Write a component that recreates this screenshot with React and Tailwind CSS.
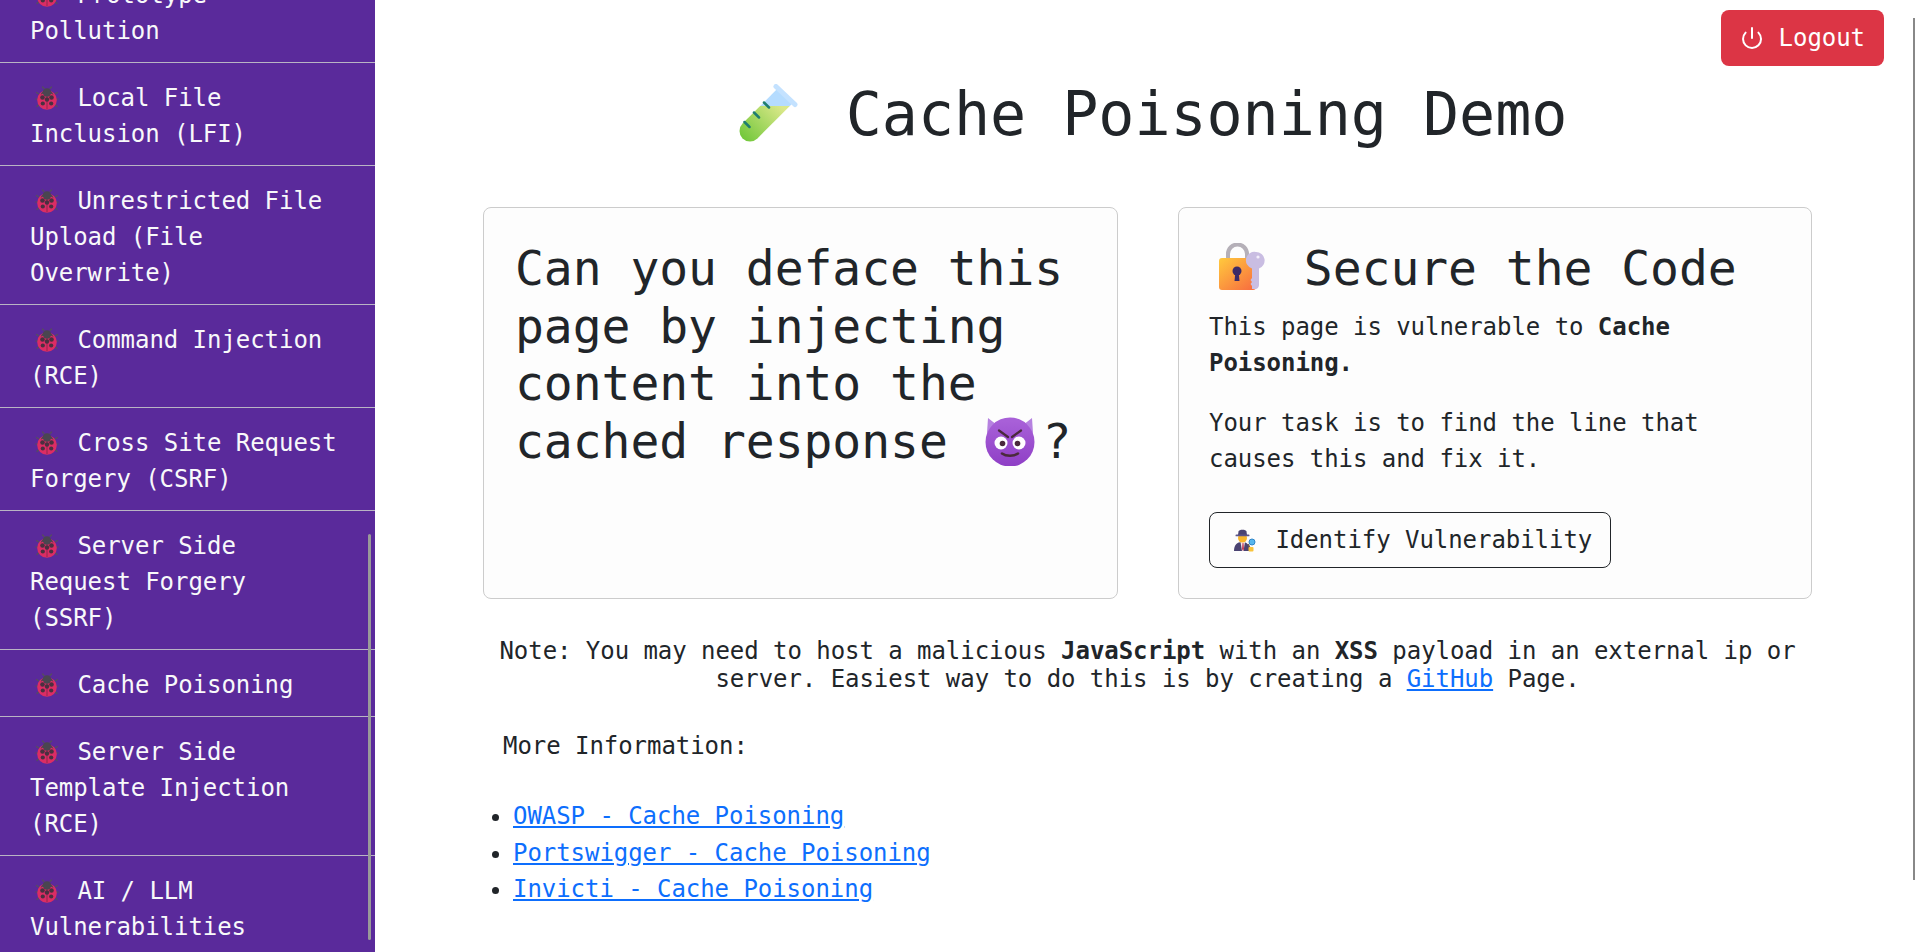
import React from 'react';
import { Power } from 'lucide-react';

const items = [
    { name: 'Prototype Pollution' },
    { name: 'Local File Inclusion (LFI)' },
    { name: 'Unrestricted File Upload (File Overwrite)' },
    { name: 'Command Injection (RCE)' },
    { name: 'Cross Site Request Forgery (CSRF)' },
    { name: 'Server Side Request Forgery (SSRF)' },
    { name: 'Cache Poisoning' },
    { name: 'Server Side Template Injection (RCE)' },
    { name: 'AI / LLM Vulnerabilities' },
];

const links = [
    'OWASP - Cache Poisoning',
    'Portswigger - Cache Poisoning',
    'Invicti - Cache Poisoning',
];

function Ladybug() {
    return (
        <span className="inline-flex w-[33px] justify-center align-[-4px]">
            <svg width="24" height="24" viewBox="0 0 24 24" fill="none">
                <g stroke="#55505c" strokeWidth="1.2" strokeLinecap="round">
                    <path d="M4 8 1.5 6.5M3 13H.7M4.5 18l-2.5 2.5M20 8l2.5-1.5M21 13h2.3M19.500 18l2.500 2.500" />
                    <path d="M9 2.500 7.500 1M15 2.500 16.500 1" />
                </g>
                <circle cx="12" cy="14" r="9.800" fill="#dc2d64" />
                <path d="M12 5v18" stroke="#7d2748" strokeWidth=".8" />
                <path d="M5.500 9a6.800 6.800 0 0 1 13 0c-2-1.500-4-2-6.500-2s-4.500.5-6.500 2z" fill="#4a4650" />
                <circle cx="12" cy="6.500" r="4.200" fill="#4a4650" />
                <circle cx="7.500" cy="11.500" r="2.300" fill="#4a3040" />
                <circle cx="16.500" cy="11.500" r="2.300" fill="#4a3040" />
                <circle cx="12" cy="13.500" r="2.200" fill="#4a3040" />
                <circle cx="7.800" cy="17.500" r="2.100" fill="#4a3040" />
                <circle cx="16.200" cy="17.500" r="2.100" fill="#4a3040" />
            </svg>
        </span>
    );
}

function TestTube() {
    return (
        <span className="inline-flex w-[82px] justify-center align-[-8px]">
            <svg width="59" height="59" viewBox="0 0 59 59" fill="none">
                <defs>
                    <clipPath id="tube-top"><rect x="0" y="0" width="59" height="22" /></clipPath>
                    <clipPath id="tube-liquid"><rect x="0" y="22" width="59" height="37" /></clipPath>
                    <linearGradient id="tube-green" x1="40" y1="20" x2="5" y2="55" gradientUnits="userSpaceOnUse">
                        <stop offset="0" stopColor="#dbe88a" />
                        <stop offset="1" stopColor="#74c83c" />
                    </linearGradient>
                </defs>
                <path d="M47 11 11 47" stroke="#b5dcff" strokeWidth="21" clipPath="url(#tube-top)" />
                <path d="M47 11 11 47" stroke="url(#tube-green)" strokeWidth="21" strokeLinecap="round" clipPath="url(#tube-liquid)" />
                <path d="M37 2.500 56 20.500" stroke="#c4e2ff" strokeWidth="5" strokeLinecap="round" />
                <path d="M25 18.500 30 23.500M15 28.500 20 33.500M5.500 38 10.500 43" stroke="#1f7d70" strokeWidth="2.500" strokeLinecap="round" />
            </svg>
        </span>
    );
}

function LockKey() {
    return (
        <span className="inline-flex w-[66px] justify-center align-[-6px]">
            <svg width="46" height="48" viewBox="0 0 46 48" fill="none">
                <defs>
                    <linearGradient id="lock-body" x1="4" y1="15" x2="30" y2="48" gradientUnits="userSpaceOnUse">
                        <stop offset="0" stopColor="#ffc53d" />
                        <stop offset="1" stopColor="#f8703f" />
                    </linearGradient>
                </defs>
                <path d="M9 17V11a9.500 9.500 0 0 1 19 0v6" stroke="#b5b0b8" strokeWidth="4" />
                <rect x="0" y="15" width="37" height="32" rx="3" fill="url(#lock-body)" />
                <circle cx="18" cy="28" r="4.500" fill="#3c2a66" />
                <path d="M16.300 30h3.400l.8 8h-5z" fill="#3c2a66" />
                <path d="M37 9a8.500 8.500 0 0 1 3 16.500V42c0 2-1.500 4-3.500 4h-3.500v-3l-1.500-2 1.500-2-1.500-2 1.500-2V25.500A8.500 8.500 0 0 1 37 9z" fill="#c9bde2" />
                <circle cx="39" cy="14" r="1.600" fill="#f3eefb" />
            </svg>
        </span>
    );
}

function Devil() {
    return (
        <span className="inline-flex w-[66px] justify-center align-[-8px]">
            <svg width="50" height="50" viewBox="0 0 50 50" fill="none">
                <defs>
                    <linearGradient id="devil-face" x1="25" y1="5" x2="25" y2="50" gradientUnits="userSpaceOnUse">
                        <stop offset="0" stopColor="#a860d8" />
                        <stop offset="1" stopColor="#8f3fc6" />
                    </linearGradient>
                </defs>
                <path d="M3 2 2 17l10-8zM47 2l1 15-10-8z" fill="#b682e0" />
                <circle cx="25" cy="26" r="24.500" fill="url(#devil-face)" />
                <circle cx="16" cy="27" r="6.500" fill="#fff" />
                <circle cx="34" cy="27" r="6.500" fill="#fff" />
                <circle cx="17.500" cy="27.500" r="2.800" fill="#4a2a3c" />
                <circle cx="32.500" cy="27.500" r="2.800" fill="#4a2a3c" />
                <path d="M14 14.500 23 21M36 14.500 27 21" stroke="#4a2a3c" strokeWidth="2.200" strokeLinecap="round" />
                <path d="M17 37.500c4 3 12 3 16 0" stroke="#4a2a3c" strokeWidth="2.600" strokeLinecap="round" />
            </svg>
        </span>
    );
}

function Detective() {
    return (
        <span className="inline-flex w-[33px] justify-center align-[-4px]">
            <svg width="24" height="24" viewBox="0 0 24 24" fill="none">
                <path d="M1 23c0-6 3-9 8-9s8 3 8 9z" fill="#4b4372" />
                <path d="M7.500 14 9 23h1.500L12 14z" fill="#f3e7e9" />
                <path d="M9.500 15h1l.5 6-1 2-1-2z" fill="#c43c55" />
                <circle cx="9.500" cy="10" r="4.500" fill="#f9b62c" />
                <path d="M5.500 3.500C6 1 13 1 13.500 3.500l.5 3.500H5z" fill="#4b4372" />
                <rect x="2.500" y="6.500" width="14" height="1.800" rx=".9" fill="#5c5488" />
                <path d="m15 16 2 4" stroke="#6b5a50" strokeWidth="1.500" />
                <circle cx="19" cy="14" r="3" fill="#57b6ec" stroke="#2f86c9" strokeWidth="1" />
                <rect x="15.500" y="19" width="5" height="4.500" rx="1" fill="#f9c33a" />
            </svg>
        </span>
    );
}

function App() {
    return (
        <div className="relative flex h-screen overflow-hidden bg-white font-['DejaVu_Sans_Mono',monospace] text-[24px] leading-[36px] tracking-[-0.002em] text-[#212529]">
            <aside className="relative w-[375px] shrink-0 overflow-hidden bg-[#5a2a9b] text-[#f8f9fa]">
                <ul className="mt-[-40px]">
                    {items.map(item => (
                        <li key={item.name} className="border-b border-[#b9b4c4] px-[30px] pb-[13px] pt-[17px]">
                            <Ladybug /> {item.name}
                        </li>
                    ))}
                </ul>
                <div className="absolute left-[368px] top-[534px] h-[406px] w-[3px] rounded-full bg-[#999]"></div>
            </aside>

            <main className="flex-1 pl-[108px] pr-[103px]">
                <h1 className="pb-[57px] pt-[78px] text-center text-[60px] leading-[72px]">
                    <TestTube /> Cache Poisoning Demo
                </h1>

                <div className="flex gap-[60px]">
                    <div className="h-[392px] w-[635px] rounded-lg border border-[#ccc] bg-[#fdfdfd] px-[31px] pt-[32px] text-[48px] leading-[57.6px]">
                        Can you deface this page by injecting content into the cached response <Devil />?
                    </div>
                    <div className="h-[392px] w-[634px] rounded-lg border border-[#ccc] bg-[#fdfdfd] px-[30px] pt-[32px]">
                        <h2 className="mb-[11px] text-[48px] leading-[57.6px]">
                            <LockKey /> Secure the Code
                        </h2>
                        <p className="mb-[24px]">This page is vulnerable to <b>Cache Poisoning.</b></p>
                        <p className="mb-[35px]">Your task is to find the line that causes this and fix it.</p>
                        <button className="h-[56px] rounded-lg border border-[#212529] px-[18px]">
                            <Detective /> Identify Vulnerability
                        </button>
                    </div>
                </div>

                <p className="mt-[38px] text-center leading-[28px]">
                    Note: You may need to host a malicious <b>JavaScript</b> with an <b>XSS</b> payload in an external ip or server. Easiest way to do this is by creating a <a className="text-[#0d6efd] underline" href="#">GitHub</a> Page.
                </p>
                <p className="mt-[35px] pl-[20px]">More Information:</p>
                <ul className="mt-[34px] list-disc pl-[30px] leading-[36.5px]">
                    {links.map(link => (
                        <li key={link}><a className="text-[#0d6efd] underline" href="#">{link}</a></li>
                    ))}
                </ul>
            </main>

            <button className="absolute right-[31px] top-[10px] flex h-[56px] items-center rounded-lg bg-[#dc3545] px-[19px] text-white">
                <Power size={24} strokeWidth={2} />
                <span className="ml-[15px]">Logout</span>
            </button>
            <div className="absolute right-0 top-[18px] h-[862px] w-[2px] bg-[#888]"></div>
        </div>
    );
}

export default App;
